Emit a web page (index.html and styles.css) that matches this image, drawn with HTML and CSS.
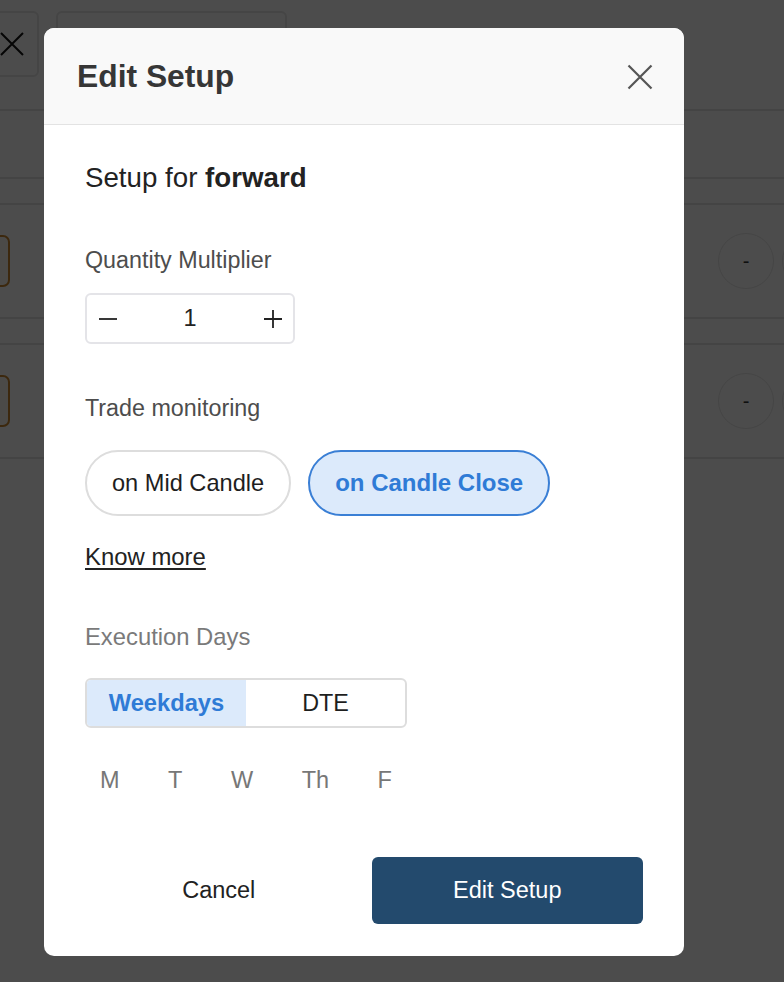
FILE: index.html
```html
<!DOCTYPE html>
<html lang="en">
<head>
  <meta charset="UTF-8">
  <meta name="viewport" content="width=device-width, initial-scale=1.0">
  <link rel="stylesheet" href="styles.css">
</head>
<body>

<!-- Page behind the dialog -->
<div id="page">
  <div class="top-bar">
    <div class="icon-box">
      <svg width="26" height="26" viewBox="0 0 26 26"><path d="M2 2 L24 24 M24 2 L2 24" stroke="#111" stroke-width="2" fill="none"/></svg>
    </div>
    <div class="search-box"></div>
  </div>
  <div class="row thin"></div>
  <div class="row gap"></div>
  <div class="row item">
    <div class="tag"></div>
    <div class="round-btn">-</div>
    <div class="round-btn peek"></div>
  </div>
  <div class="row gap"></div>
  <div class="row item">
    <div class="tag"></div>
    <div class="round-btn">-</div>
    <div class="round-btn peek"></div>
  </div>
</div>

<div class="overlay">
  <div class="modal">
    <div class="modal-header">
      <div class="modal-title">Edit Setup</div>
      <button class="close-btn">
        <svg width="26" height="26" viewBox="0 0 26 26"><path d="M1.5 1.5 L24.5 24.5 M24.5 1.5 L1.5 24.5" stroke="#555" stroke-width="2.2" fill="none"/></svg>
      </button>
    </div>

    <div class="modal-body">
      <div class="setup-name">Setup for <b>forward</b></div>

      <div class="field-label">Quantity Multiplier</div>
      <div class="stepper">
        <button class="step-btn">
          <svg width="18" height="18" viewBox="0 0 18 18"><path d="M0 9 H18" stroke="#222" stroke-width="1.8"/></svg>
        </button>
        <div class="step-value">1</div>
        <button class="step-btn">
          <svg width="18" height="18" viewBox="0 0 18 18"><path d="M0 9 H18 M9 0 V18" stroke="#222" stroke-width="1.8"/></svg>
        </button>
      </div>

      <div class="field-label spaced">Trade monitoring</div>
      <div class="pills">
        <div class="pill">on Mid Candle</div>
        <div class="pill active">on Candle Close</div>
      </div>
      <a href="#" class="know-more">Know more</a>

      <div class="field-label muted">Execution Days</div>
      <div class="segmented">
        <div class="segment active">Weekdays</div>
        <div class="segment">DTE</div>
      </div>
      <div class="days">
        <span>M</span>
        <span>T</span>
        <span>W</span>
        <span>Th</span>
        <span>F</span>
      </div>

      <div class="modal-footer">
        <button class="cancel-btn">Cancel</button>
        <button class="primary-btn">Edit Setup</button>
      </div>
    </div>
  </div>
</div>

</body>
</html>
```

FILE: styles.css
```css
body {
  font-family: 'Liberation Sans', Arial, sans-serif;
  margin: 0;
  overflow: hidden;
  background-color: #fff;
}

button {
  font-family: inherit;
  background: none;
  border: none;
  padding: 0;
  cursor: pointer;
}

/* background page */
#page {
  width: 784px;
  overflow: hidden;
}

.top-bar {
  height: 111px;
  border-bottom: 2px solid #e3e3e3;
  display: flex;
  align-items: flex-start;
  padding-top: 11px;
  box-sizing: border-box;
  gap: 17px;
}

.icon-box {
  width: 66px;
  height: 66px;
  margin-left: -27px;
  border: 2px solid #e6e6e6;
  border-radius: 6px;
  box-sizing: border-box;
  display: flex;
  align-items: center;
  justify-content: center;
  padding-left: 12px;
}

.search-box {
  width: 231px;
  height: 66px;
  border: 2px solid #e6e6e6;
  border-radius: 6px;
  box-sizing: border-box;
}

.row {
  border-bottom: 2px solid #e3e3e3;
  overflow: hidden;
}

.row.thin {
  height: 66px;
}

.row.gap {
  height: 24px;
}

.row.item {
  height: 112px;
  display: flex;
  align-items: center;
}

.tag {
  width: 50px;
  height: 52px;
  margin-left: -40px;
  border: 2px solid #c8862f;
  border-radius: 7px;
  box-sizing: border-box;
  background: #fbf7f1;
  flex-shrink: 0;
}

.round-btn {
  width: 56px;
  height: 56px;
  margin-left: auto;
  border: 1px solid #e6e6e6;
  border-radius: 50%;
  box-sizing: border-box;
  display: flex;
  align-items: center;
  justify-content: center;
  font-size: 20px;
  color: #333;
  flex-shrink: 0;
}

.round-btn.peek {
  margin-left: 8px;
  margin-right: -54px;
}

/* dialog */
.overlay {
  position: fixed;
  inset: 0;
  background: rgba(0, 0, 0, 0.7);
  padding: 28px 0 0 44px;
}

.modal {
  width: 640px;
  background: #fff;
  border-radius: 10px;
  overflow: hidden;
}

.modal-header {
  height: 96px;
  background: #f9f9f9;
  border-bottom: 1px solid #e3e3e3;
  display: flex;
  align-items: center;
  justify-content: space-between;
  padding: 0 31px 0 33px;
}

.modal-title {
  font-size: 31.8px;
  font-weight: bold;
  color: #363636;
}

.close-btn {
  width: 26px;
  height: 26px;
  margin-top: 2px;
}

.modal-body {
  padding: 36px 41px 32px 41px;
}

.setup-name {
  font-size: 27.7px;
  line-height: 34px;
  color: #222;
}

.field-label {
  font-size: 23.3px;
  line-height: 28px;
  color: #4d4d4d;
  margin-top: 51px;
}

.field-label.spaced {
  margin-top: 50px;
}

.field-label.muted {
  color: #7a7a7a;
  margin-top: 52px;
  font-size: 23.8px;
}

.stepper {
  margin-top: 19px;
  width: 210px;
  height: 51px;
  border: 2px solid #e4e4e8;
  border-radius: 6px;
  box-sizing: border-box;
  display: flex;
  align-items: center;
}

.step-btn {
  width: 41px;
  height: 100%;
  display: flex;
  align-items: center;
  justify-content: center;
}

.step-value {
  flex: 1;
  text-align: center;
  font-size: 23.5px;
  color: #222;
}

.pills {
  display: flex;
  gap: 17px;
  margin-top: 28px;
}

.pill {
  height: 66px;
  padding: 0 25px;
  border: 2px solid #ddd;
  border-radius: 33px;
  box-sizing: border-box;
  display: flex;
  align-items: center;
  font-size: 23.6px;
  color: #1e1e1e;
}

.pill.active {
  border-color: #3a7fd5;
  background: #dceafb;
  color: #2f7bd6;
  font-weight: bold;
  font-size: 24px;
}

.know-more {
  display: inline-block;
  margin-top: 27px;
  font-size: 23.9px;
  line-height: 28px;
  color: #222;
  text-decoration: underline;
  text-underline-offset: 3px;
}

.segmented {
  margin-top: 27px;
  width: 322px;
  height: 50px;
  border: 2px solid #ddd;
  border-radius: 6px;
  box-sizing: border-box;
  display: grid;
  grid-template-columns: 1fr 1fr;
  overflow: hidden;
}

.segment {
  display: flex;
  align-items: center;
  justify-content: center;
  font-size: 23.3px;
  color: #1e1e1e;
}

.segment.active {
  background: #dceafb;
  color: #2f7bd6;
  font-weight: bold;
  font-size: 23.7px;
}

.days {
  display: flex;
  gap: 18.5px;
  margin-top: 38px;
  font-size: 23.5px;
  line-height: 28px;
  color: #777;
}

.days span {
  padding: 0 15px;
}

.modal-footer {
  display: grid;
  grid-template-columns: 1fr 1fr;
  gap: 15px;
  margin-top: 63px;
}

.cancel-btn {
  height: 67px;
  font-size: 23.5px;
  color: #222;
  padding-right: 4px;
}

.primary-btn {
  height: 67px;
  background: #234a6d;
  color: #fff;
  border-radius: 6px;
  font-size: 23.5px;
}
```
